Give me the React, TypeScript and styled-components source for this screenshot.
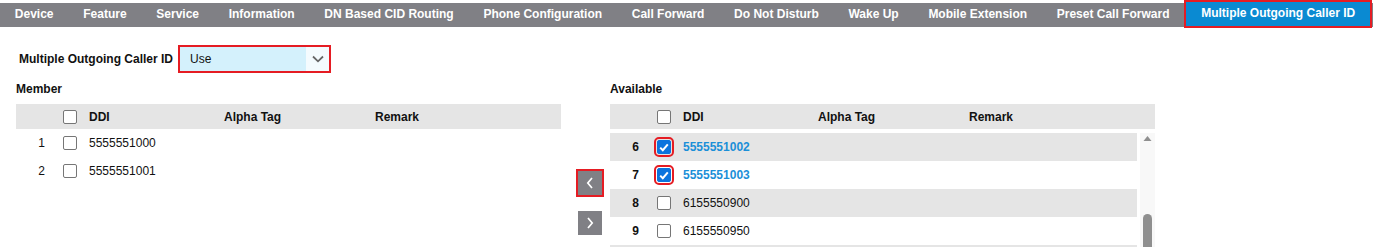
import React from 'react';
import styled, { createGlobalStyle } from 'styled-components';

const GlobalStyle = createGlobalStyle`
  html, body {
    margin: 0;
    padding: 0;
    overflow: hidden;
    background: #fff;
  }
  body {
    font-family: 'Liberation Sans', Arial, sans-serif;
    font-size: 12px;
    color: #111;
  }
`;

const TABS = [
  'Device',
  'Feature',
  'Service',
  'Information',
  'DN Based CID Routing',
  'Phone Configuration',
  'Call Forward',
  'Do Not Disturb',
  'Wake Up',
  'Mobile Extension',
  'Preset Call Forward',
  'Multiple Outgoing Caller ID'
];

const TabBar = styled.div`
  display: flex;
  align-items: flex-start;
  height: 24px;
  margin-top: 3px;
  background: #808085;
`;

const Tab = styled.div<{ $active?: boolean }>`
  box-sizing: border-box;
  padding: 0 14.85px;
  height: ${(p) => (p.$active ? '28px' : '24px')};
  line-height: 23px;
  margin-top: ${(p) => (p.$active ? '-3px' : '0')};
  font-weight: bold;
  font-size: 12px;
  color: #fff;
  white-space: nowrap;
  background: ${(p) => (p.$active ? '#0a8ad2' : 'transparent')};
  border: ${(p) => (p.$active ? '2px solid #e51c23' : 'none')};
`;

const Content = styled.div`
  padding-left: 16px;
`;

const FieldRow = styled.div`
  display: flex;
  align-items: center;
  margin-top: 18px;
  padding-left: 3px;
`;

const FieldLabel = styled.label`
  font-weight: bold;
  margin-right: 5px;
`;

const Select = styled.div`
  box-sizing: border-box;
  width: 153px;
  height: 28px;
  border: 2px solid #e51c23;
  display: flex;
  background: #d4f1fc;
`;

const SelectValue = styled.span`
  flex: 1;
  line-height: 24px;
  padding-left: 10px;
`;

const SelectArrow = styled.span`
  width: 23px;
  display: flex;
  align-items: center;
  justify-content: center;
  background: #f4fbfe;
`;

const Panels = styled.div`
  display: flex;
  margin-top: 6px;
`;

const Panel = styled.div`
  width: 545px;
`;

const PanelTitle = styled.div`
  font-weight: bold;
  font-size: 12px;
  line-height: 20px;
  margin-bottom: 5px;
`;

const COLS = '47px 26px 135px 151px 1fr';

const HeaderRow = styled.div<{ $gap: number }>`
  display: grid;
  grid-template-columns: ${COLS};
  align-items: center;
  height: 25px;
  background: #e5e5e5;
  font-weight: bold;
  margin-bottom: ${(p) => p.$gap}px;
`;

const Row = styled.div<{ $shaded?: boolean }>`
  display: grid;
  grid-template-columns: ${COLS};
  align-items: center;
  height: 28px;
  background: ${(p) => (p.$shaded ? '#e5e5e5' : 'transparent')};
`;

const Num = styled.span<{ $bold?: boolean }>`
  text-align: right;
  padding-right: 18px;
  font-weight: ${(p) => (p.$bold ? 'bold' : 'normal')};
`;

const Ddi = styled.span<{ $selected?: boolean }>`
  color: ${(p) => (p.$selected ? '#1b8fd8' : '#111')};
  font-weight: ${(p) => (p.$selected ? 'bold' : 'normal')};
`;

const Box = styled.span<{ $checked?: boolean; $marked?: boolean }>`
  box-sizing: border-box;
  width: 14px;
  height: 14px;
  border-radius: 2px;
  display: flex;
  align-items: center;
  justify-content: center;
  background: ${(p) => (p.$checked ? '#0b74de' : '#fff')};
  border: 1px solid ${(p) => (p.$checked ? '#0b74de' : '#767676')};
  outline: ${(p) => (p.$marked ? '2px solid #e51c23' : 'none')};
  outline-offset: 1px;
`;

const Mover = styled.div`
  width: 49px;
  box-sizing: border-box;
  padding: 92px 0 0 17px;
  display: flex;
  flex-direction: column;
  gap: 16px;
`;

const MoveButton = styled.button<{ $marked?: boolean }>`
  width: 24px;
  height: 24px;
  padding: 0;
  border: none;
  background: #808085;
  display: flex;
  align-items: center;
  justify-content: center;
  outline: ${(p) => (p.$marked ? '2px solid #e51c23' : 'none')};
  outline-offset: 0;
`;

const ListWrap = styled.div`
  display: flex;
  height: 116px;
  overflow: hidden;
`;

const List = styled.div`
  width: 527px;
`;

const ScrollTrack = styled.div`
  width: 15px;
  margin-left: 3px;
  background: #f8f8f8;
  display: flex;
  flex-direction: column;
  align-items: center;
  svg {
    flex-shrink: 0;
    margin-top: 2px;
  }
`;

const ScrollThumb = styled.div`
  flex-shrink: 0;
  width: 9px;
  height: 60px;
  margin-top: 72px;
  border-radius: 5px 5px 0 0;
  background: #8f8f8f;
`;

const Check = () => (
  <svg width="10" height="9" viewBox="0 0 10 9">
    <path d="M1.2 4.6 L3.8 7.2 L8.8 1.4" fill="none" stroke="#fff" strokeWidth="2" />
  </svg>
);

const Chevron = ({ dir }: { dir: 'left' | 'right' }) => (
  <svg width="10" height="14" viewBox="0 0 10 14">
    <path
      d={dir === 'left' ? 'M7 2 L2.8 7 L7 12' : 'M3 2 L7.2 7 L3 12'}
      fill="none"
      stroke="#fff"
      strokeWidth="1.7"
    />
  </svg>
);

type Item = { n: number; ddi: string; checked?: boolean };

const MEMBERS: Item[] = [
  { n: 1, ddi: '5555551000' },
  { n: 2, ddi: '5555551001' }
];

const AVAILABLE: Item[] = [
  { n: 6, ddi: '5555551002', checked: true },
  { n: 7, ddi: '5555551003', checked: true },
  { n: 8, ddi: '6155550900' },
  { n: 9, ddi: '6155550950' }
];

const Header = ({ gap }: { gap: number }) => (
  <HeaderRow $gap={gap}>
    <span />
    <Box />
    <span>DDI</span>
    <span>Alpha Tag</span>
    <span>Remark</span>
  </HeaderRow>
);

export default function App() {
  return (
    <>
      <GlobalStyle />
      <TabBar>
        {TABS.map((t, i) => (
          <Tab key={t} $active={i === TABS.length - 1}>
            {t}
          </Tab>
        ))}
      </TabBar>
      <Content>
        <FieldRow>
          <FieldLabel>Multiple Outgoing Caller ID</FieldLabel>
          <Select>
            <SelectValue>Use</SelectValue>
            <SelectArrow>
              <svg width="12" height="8" viewBox="0 0 12 8">
                <path d="M1 1.5 L6 6.3 L11 1.5" fill="none" stroke="#666" strokeWidth="1.8" />
              </svg>
            </SelectArrow>
          </Select>
        </FieldRow>
        <Panels>
          <Panel>
            <PanelTitle>Member</PanelTitle>
            <Header gap={0} />
            {MEMBERS.map((m) => (
              <Row key={m.n}>
                <Num>{m.n}</Num>
                <Box />
                <Ddi>{m.ddi}</Ddi>
                <span />
                <span />
              </Row>
            ))}
          </Panel>
          <Mover>
            <MoveButton $marked>
              <Chevron dir="left" />
            </MoveButton>
            <MoveButton>
              <Chevron dir="right" />
            </MoveButton>
          </Mover>
          <Panel>
            <PanelTitle>Available</PanelTitle>
            <Header gap={4} />
            <ListWrap>
              <List>
                {AVAILABLE.map((a, i) => (
                  <Row key={a.n} $shaded={i % 2 === 0}>
                    <Num $bold>{a.n}</Num>
                    <Box $checked={a.checked} $marked={a.checked}>
                      {a.checked && <Check />}
                    </Box>
                    <Ddi $selected={a.checked}>{a.ddi}</Ddi>
                    <span />
                    <span />
                  </Row>
                ))}
                {/* next row, scrolled just into view */}
                <Row $shaded />
              </List>
              <ScrollTrack>
                <svg width="9" height="7" viewBox="0 0 9 7">
                  <path d="M0.5 6 L4.5 1 L8.5 6 Z" fill="#8f8f8f" />
                </svg>
                <ScrollThumb />
              </ScrollTrack>
            </ListWrap>
          </Panel>
        </Panels>
      </Content>
    </>
  );
}
